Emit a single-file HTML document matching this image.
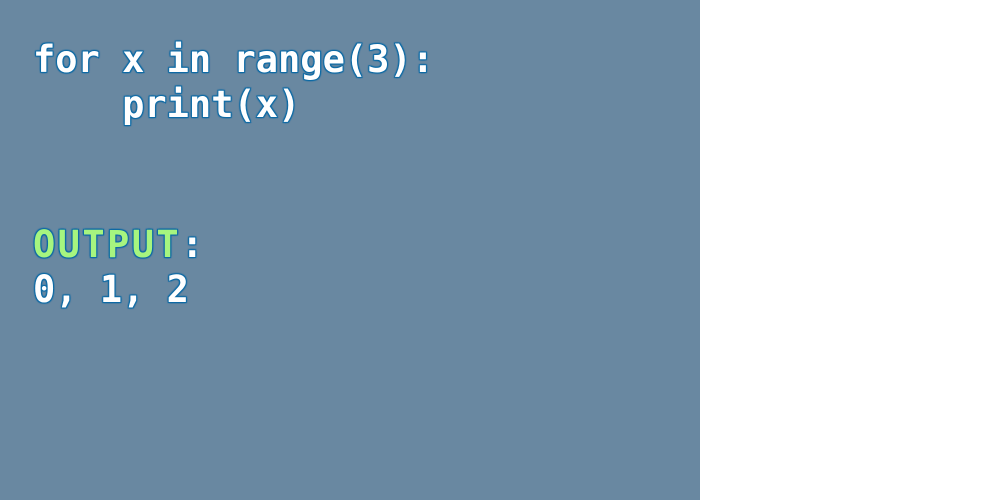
<!DOCTYPE html>
<html><head><style>
html,body{margin:0;padding:0;width:1000px;height:500px;background:#fff;overflow:hidden}
#p{position:absolute;left:0;top:0;width:700px;height:500px;background:#6988a1}
.t{position:absolute;left:33px;margin:0;font-family:"DejaVu Sans Mono",monospace;font-weight:bold;font-size:37px;line-height:45px;color:#fff;white-space:pre;
-webkit-text-stroke:1.5px #0d6aa5;paint-order:stroke fill;text-shadow:0 0 2px #0d6aa5,1px 1px 1px #0d6aa5,-1px -1px 1px #0d6aa5,1px -1px 1px #0d6aa5,-1px 1px 1px #0d6aa5}
.g{color:#a6f57f;letter-spacing:2.4px}
</style></head><body>
<div id="p">
<div class="t" style="top:37px">for x in range(3):
    print(x)</div>
<div class="t" style="top:222px"><span class="g">OUTPUT</span>:
0, 1, 2</div>
</div>
</body></html>
